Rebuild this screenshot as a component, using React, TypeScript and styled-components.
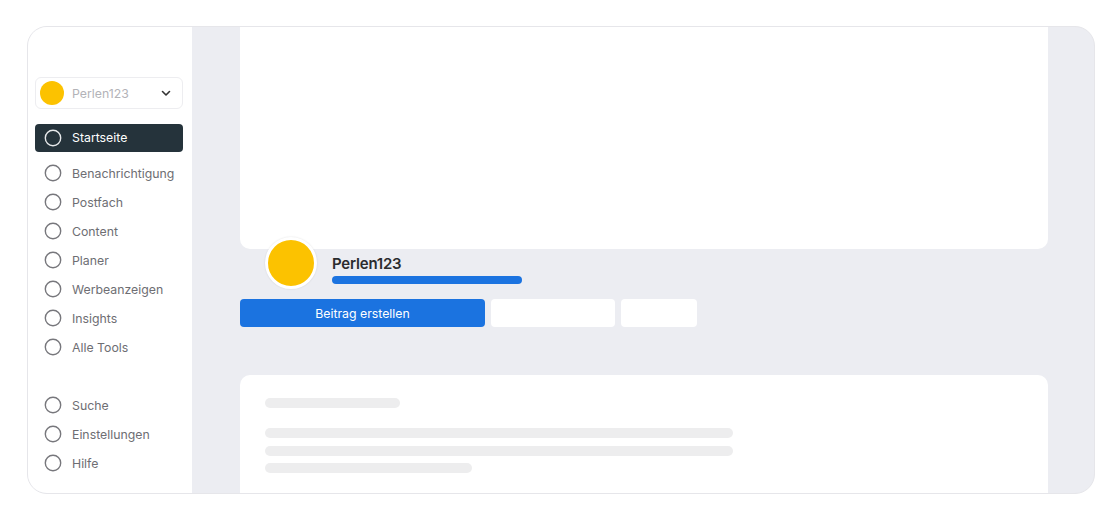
import React from "react";
import styled, { createGlobalStyle } from "styled-components";

const Global = createGlobalStyle`
  html, body { margin: 0; padding: 0; background: #ffffff; }
  body { font-family: "Inter", "Liberation Sans", sans-serif; }
  * { box-sizing: border-box; }
`;

const Page = styled.div`
  width: 1120px;
  height: 520px;
  padding: 26px 25px 26px 27px;
`;

const Frame = styled.div`
  display: flex;
  width: 1068px;
  height: 468px;
  border: 1px solid #e6e6ea;
  border-radius: 20px;
  overflow: hidden;
  background: #ecedf2;
`;

const Sidebar = styled.aside`
  width: 164px;
  flex-shrink: 0;
  background: #ffffff;
  padding: 50px 9px 0 7px;
  display: flex;
  flex-direction: column;
`;

const Account = styled.div`
  height: 32px;
  border: 1px solid #ededf0;
  border-radius: 6px;
  display: flex;
  align-items: center;
  padding: 0 10px 0 4px;
  gap: 8px;
  margin-bottom: 15px;
`;

const Dot = styled.span<{ $size: number; $ring?: number }>`
  width: ${(p) => p.$size}px;
  height: ${(p) => p.$size}px;
  border-radius: 50%;
  background: #fcc200;
  flex-shrink: 0;
  ${(p) => (p.$ring ? `border: ${p.$ring}px solid #ffffff; box-shadow: 0 0 2px rgba(0,0,0,0.12);` : "")}
`;

const AccountName = styled.span`
  flex: 1;
  font-size: 12.3px;
  color: #b3b3b8;
`;

const NavItem = styled.div<{ $active?: boolean }>`
  height: ${(p) => (p.$active ? 28 : 29)}px;
  display: flex;
  align-items: center;
  gap: 10px;
  padding-left: 9px;
  padding-bottom: 1px;
  border-radius: 4px;
  font-size: 12.3px;
  color: ${(p) => (p.$active ? "#ffffff" : "#6e6e73")};
  background: ${(p) => (p.$active ? "#25333b" : "transparent")};
  margin-bottom: ${(p) => (p.$active ? 7 : 0)}px;
`;

const Spacer = styled.div`
  height: 29px;
`;

const Main = styled.main`
  flex: 1;
  padding: 0 46px 0 48px;
  display: flex;
  flex-direction: column;
`;

const Cover = styled.div`
  height: 222px;
  flex-shrink: 0;
  background: #ffffff;
  border-radius: 0 0 10px 10px;
`;

const Profile = styled.div`
  display: flex;
  align-items: flex-start;
  gap: 15px;
  margin-top: -12px;
  padding-left: 25px;
`;

const NameBlock = styled.div`
  display: flex;
  flex-direction: column;
  gap: 3px;
  margin-top: 17px;
`;

const Name = styled.div`
  font-size: 15px;
  line-height: 19px;
  font-weight: 600;
  color: #2b2b2e;
  letter-spacing: -0.2px;
`;

const Bar = styled.div`
  width: 190px;
  height: 8px;
  border-radius: 4px;
  background: #1b73e0;
`;

const Actions = styled.div`
  display: flex;
  gap: 6px;
  margin-top: 10px;
`;

const Btn = styled.div<{ $w: number; $primary?: boolean }>`
  width: ${(p) => p.$w}px;
  height: 28px;
  border-radius: 4px;
  background: ${(p) => (p.$primary ? "#1b73e0" : "#ffffff")};
  color: #ffffff;
  font-size: 12.3px;
  display: flex;
  align-items: center;
  justify-content: center;
`;

const Card = styled.div`
  margin-top: 48px;
  flex: 1;
  background: #ffffff;
  border-radius: 10px 10px 0 0;
  padding: 23px 25px 0 25px;
  display: flex;
  flex-direction: column;
`;

const Skel = styled.div<{ $w: number; $mt: number }>`
  width: ${(p) => p.$w}px;
  height: 10px;
  margin-top: ${(p) => p.$mt}px;
  border-radius: 5px;
  background: #ededee;
`;

const Ring = () => (
  <svg width="18" height="18" viewBox="0 0 18 18" fill="none">
    <circle cx="9" cy="9" r="7.7" stroke="currentColor" strokeWidth="1.4" />
  </svg>
);

const RingIcon = styled.span<{ $active?: boolean }>`
  display: flex;
  color: ${(p) => (p.$active ? "#e6e8ea" : "#77777c")};
`;

const Chevron = () => (
  <svg width="12" height="12" viewBox="0 0 12 12" fill="none">
    <path d="M2.5 4.5 L6 8 L9.5 4.5" stroke="#333" strokeWidth="1.6" strokeLinecap="round" strokeLinejoin="round" />
  </svg>
);

const main = ["Benachrichtigung", "Postfach", "Content", "Planer", "Werbeanzeigen", "Insights", "Alle Tools"];
const bottom = ["Suche", "Einstellungen", "Hilfe"];

export default function App() {
  return (
    <>
      <Global />
      <Page>
        <Frame>
          <Sidebar>
            <Account>
              <Dot $size={24} />
              <AccountName>Perlen123</AccountName>
              <Chevron />
            </Account>
            <NavItem $active>
              <RingIcon $active>
                <Ring />
              </RingIcon>
              Startseite
            </NavItem>
            {main.map((m) => (
              <NavItem key={m}>
                <RingIcon>
                  <Ring />
                </RingIcon>
                {m}
              </NavItem>
            ))}
            <Spacer />
            {bottom.map((m) => (
              <NavItem key={m}>
                <RingIcon>
                  <Ring />
                </RingIcon>
                {m}
              </NavItem>
            ))}
          </Sidebar>
          <Main>
            <Cover />
            <Profile>
              <Dot $size={52} $ring={3} />
              <NameBlock>
                <Name>Perlen123</Name>
                <Bar />
              </NameBlock>
            </Profile>
            <Actions>
              <Btn $w={245} $primary>
                Beitrag erstellen
              </Btn>
              <Btn $w={124} />
              <Btn $w={76} />
            </Actions>
            <Card>
              <Skel $w={135} $mt={0} />
              <Skel $w={468} $mt={20} />
              <Skel $w={468} $mt={8} />
              <Skel $w={207} $mt={7} />
            </Card>
          </Main>
        </Frame>
      </Page>
    </>
  );
}
